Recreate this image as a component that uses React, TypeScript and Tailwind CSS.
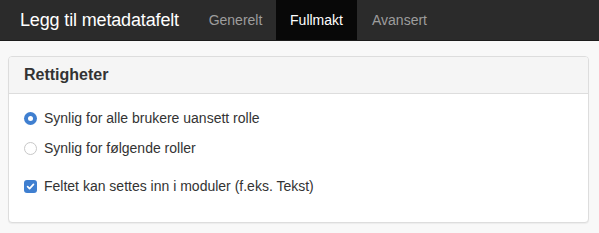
import React from "react";

export default function App() {
  return (
    <div className="min-h-[233px] w-full bg-[#f8f8f8] font-['Helvetica_Neue','Liberation_Sans',Arial,sans-serif] text-[#333]">
      <div className="flex h-[41px] items-stretch border-b border-[#1c1c1c] bg-[#2b2b2b]">
        <div className="flex w-[195px] shrink-0 items-center whitespace-nowrap pl-5 text-[18px] tracking-[-0.15px] text-white">Legg til metadatafelt</div>
        <div className="flex w-[81px] items-center justify-center text-[14px] text-[#9d9d9d]">Generelt</div>
        <div className="flex w-[81px] items-center justify-center bg-[#080808] text-[14px] text-white">Fullmakt</div>
        <div className="flex items-center px-[15px] text-[14px] text-[#9d9d9d]">Avansert</div>
      </div>
      <div className="pt-[15px]">
        <div className="ml-2 mr-[10px] overflow-hidden rounded-[4px] border border-[#dddddd] bg-white shadow-[0_1px_1px_rgba(0,0,0,0.05)]">
          <div className="flex h-[37px] items-center border-b border-[#dddddd] bg-[#f5f5f5] px-[15px] text-[16px] font-bold text-[#333]">
            Rettigheter
          </div>
          <div className="px-[15px] pb-[26px] pt-[14px] text-[14px]">
            <div className="flex h-5 items-center gap-[7px]">
              <span className="flex h-[13px] w-[13px] items-center justify-center rounded-full bg-[#3f7fd0]">
                <span className="h-[5px] w-[5px] rounded-full bg-white" />
              </span>
              <span>Synlig for alle brukere uansett rolle</span>
            </div>
            <div className="mt-[10px] flex h-5 items-center gap-[7px]">
              <span className="h-[13px] w-[13px] rounded-full border border-[#c8c8c8] bg-white" />
              <span>Synlig for følgende roller</span>
            </div>
            <div className="mt-[18px] flex h-5 items-center gap-[7px]">
              <span className="flex h-[13px] w-[13px] items-center justify-center rounded-[3px] bg-[#3f7fd0]">
                <svg width="9" height="9" viewBox="0 0 10 10" fill="none">
                  <path d="M1.8 5.2 L4 7.3 L8.3 2.7" stroke="white" strokeWidth="1.9" strokeLinecap="round" strokeLinejoin="round" />
                </svg>
              </span>
              <span>Feltet kan settes inn i moduler (f.eks. Tekst)</span>
            </div>
          </div>
        </div>
      </div>
    </div>
  );
}
